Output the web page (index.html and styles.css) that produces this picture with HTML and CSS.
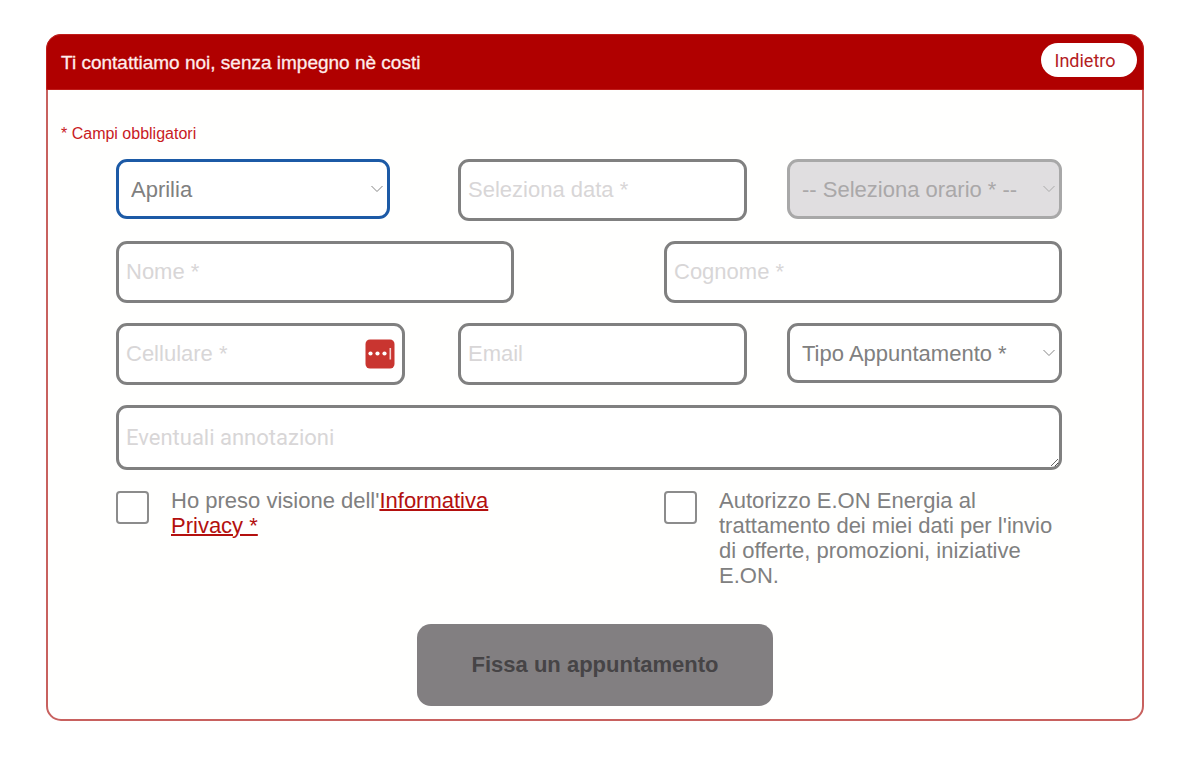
FILE: index.html
```html
<!DOCTYPE html>
<html lang="it">
<head>
<meta charset="utf-8">
<meta name="viewport" content="width=device-width, initial-scale=1">
<title>Fissa un appuntamento</title>
<link rel="stylesheet" href="styles.css">
</head>
<body>
<main class="card">
  <header class="card-header">
    <h1 class="title">Ti contattiamo noi, senza impegno nè costi</h1>
    <button class="back" type="button">Indietro</button>
  </header>
  <form class="form">
    <p class="required">* Campi obbligatori</p>
    <div class="fields">
      <div class="row thirds">
        <div class="select-wrap narrow">
          <select class="control select active" aria-label="Punto vendita"><option>Aprilia</option></select>
          <svg class="chevron" viewBox="0 0 12 8" aria-hidden="true"><path d="M0.500 1 L6 6.500 L11.500 1"/></svg>
        </div>
        <div class="middle">
          <input class="control" type="text" placeholder="Seleziona data *" aria-label="Seleziona data">
        </div>
        <div class="select-wrap disabled">
          <select class="control select" aria-label="Seleziona orario" disabled><option>-- Seleziona orario * --</option></select>
          <svg class="chevron" viewBox="0 0 12 8" aria-hidden="true"><path d="M0.500 1 L6 6.500 L11.500 1"/></svg>
        </div>
      </div>
      <div class="row halves">
        <input class="control" type="text" placeholder="Nome *" aria-label="Nome">
        <input class="control" type="text" placeholder="Cognome *" aria-label="Cognome">
      </div>
      <div class="row thirds">
        <div class="phone">
          <input class="control" type="tel" placeholder="Cellulare *" aria-label="Cellulare">
          <svg class="autofill" viewBox="0 0 30 30" aria-hidden="true">
            <rect x="0.500" y="0.500" width="29" height="29" rx="4.500" fill="#c93530"/>
            <circle cx="5.500" cy="14.500" r="2.100" fill="#fff"/>
            <circle cx="12.500" cy="14.500" r="2.100" fill="#fff"/>
            <circle cx="19.500" cy="14.500" r="2.100" fill="#fff"/>
            <rect x="24.500" y="9" width="1.600" height="11.500" fill="#f3d0cd"/>
          </svg>
        </div>
        <div class="middle">
          <input class="control" type="email" placeholder="Email" aria-label="Email">
        </div>
        <div class="select-wrap">
          <select class="control select" aria-label="Tipo Appuntamento"><option>Tipo Appuntamento *</option></select>
          <svg class="chevron" viewBox="0 0 12 8" aria-hidden="true"><path d="M0.500 1 L6 6.500 L11.500 1"/></svg>
        </div>
      </div>
      <textarea class="control notes" placeholder="Eventuali annotazioni" aria-label="Eventuali annotazioni"></textarea>
      <div class="row halves">
        <div class="check">
          <input class="box" type="checkbox" id="privacy">
          <label for="privacy">Ho preso visione dell'<a class="link" href="#privacy">Informativa Privacy *</a></label>
        </div>
        <div class="check">
          <input class="box" type="checkbox" id="marketing">
          <label for="marketing">Autorizzo E.ON Energia al trattamento dei miei dati per l'invio di offerte, promozioni, iniziative E.ON.</label>
        </div>
      </div>
    </div>
    <button class="submit" type="submit" disabled>Fissa un appuntamento</button>
  </form>
</main>
</body>
</html>
```
FILE: styles.css
```css
* { box-sizing: border-box; }

body {
  margin: 0;
  padding: 34px 56px 50px 46px;
  background: #fff;
  color: #808080;
  font-family: "Liberation Sans", Arial, sans-serif;
  font-size: 22px;
}

.card {
  border: 2px solid #c8615f;
  border-radius: 15px;
  background: #fffffe;
}

.card-header {
  display: flex;
  align-items: flex-start;
  justify-content: space-between;
  margin: -2px;
  padding: 8px 6px 12px 14px;
  border: 1px solid #c01c1a;
  border-radius: 15px 15px 0 0;
  background: #b00000;
}

.title {
  margin: 0;
  padding-top: 8px;
  color: #ffeceb;
  font-size: 19px;
  font-weight: 400;
  line-height: 24px;
  -webkit-text-stroke: 0.3px #ffeceb;
}

.back {
  width: 96px;
  height: 34px;
  padding: 0 8px 0 0;
  border: 0;
  border-radius: 17px;
  background: #fff;
  color: #b3201e;
  font: 18px Roboto, "Noto Sans", sans-serif;
}

.form {
  display: flex;
  flex-direction: column;
  padding: 36px 13px 13px;
}

.required {
  margin: 0 0 15px;
  color: #c8201e;
  font-size: 16px;
  line-height: 20px;
}

.fields {
  display: flex;
  flex-direction: column;
  gap: 20px;
  padding: 0 67px 0 55px;
}

.row { display: grid; align-items: start; }

.thirds { grid-template-columns: 342fr 329fr 275fr; }

.halves {
  grid-template-columns: 1fr 1fr;
  column-gap: 150px;
}

.control {
  display: block;
  width: 100%;
  height: 62px;
  margin: 0;
  padding: 0 7px;
  border: 3px solid #808080;
  border-radius: 11px;
  background: #fff;
  color: #808080;
  font: 22px "Liberation Sans", Arial, sans-serif;
  outline: 0;
}

.control::placeholder { color: #d8d6d7; opacity: 1; }

.select-wrap,
.phone { position: relative; }

.phone { margin-right: 53px; }

.narrow { margin-right: 68px; }

.middle { margin-right: 40px; }

.select {
  height: 60px;
  padding: 0 32px 0 12px;
  appearance: none;
}

.active { border-color: #1c5aa6; }

.disabled .select {
  border-color: #a8a8a8;
  background: #e0dee0;
  color: #aaa8a9;
  opacity: 1;
}

.chevron {
  position: absolute;
  top: 26px;
  right: 7px;
  width: 12px;
  height: 8px;
  fill: none;
  stroke: #858585;
  pointer-events: none;
}

.disabled .chevron { stroke: #aaa; }

.autofill {
  position: absolute;
  top: 16px;
  right: 10px;
  width: 30px;
  height: 30px;
}

.notes {
  height: 65px;
  padding: 16px 7px;
  font-family: Roboto, "Noto Sans", sans-serif;
  line-height: 28px;
  overflow: hidden;
  resize: both;
}

.check {
  display: flex;
  align-items: flex-start;
  gap: 22px;
  margin-top: -2px;
  line-height: 25px;
}

.box {
  flex: none;
  width: 33px;
  height: 33px;
  margin: 3px 0 0;
  border: 2px solid #8c8c8c;
  border-radius: 4px;
  background: #fff;
  appearance: none;
}

.link { color: #b3100e; text-decoration: underline; text-decoration-thickness: 2px; }

.submit {
  align-self: center;
  width: 356px;
  height: 82px;
  margin-top: 36px;
  border: 0;
  border-radius: 14px;
  background: #827f81;
  color: #464446;
  font: bold 22px "Liberation Sans", Arial, sans-serif;
}
```
